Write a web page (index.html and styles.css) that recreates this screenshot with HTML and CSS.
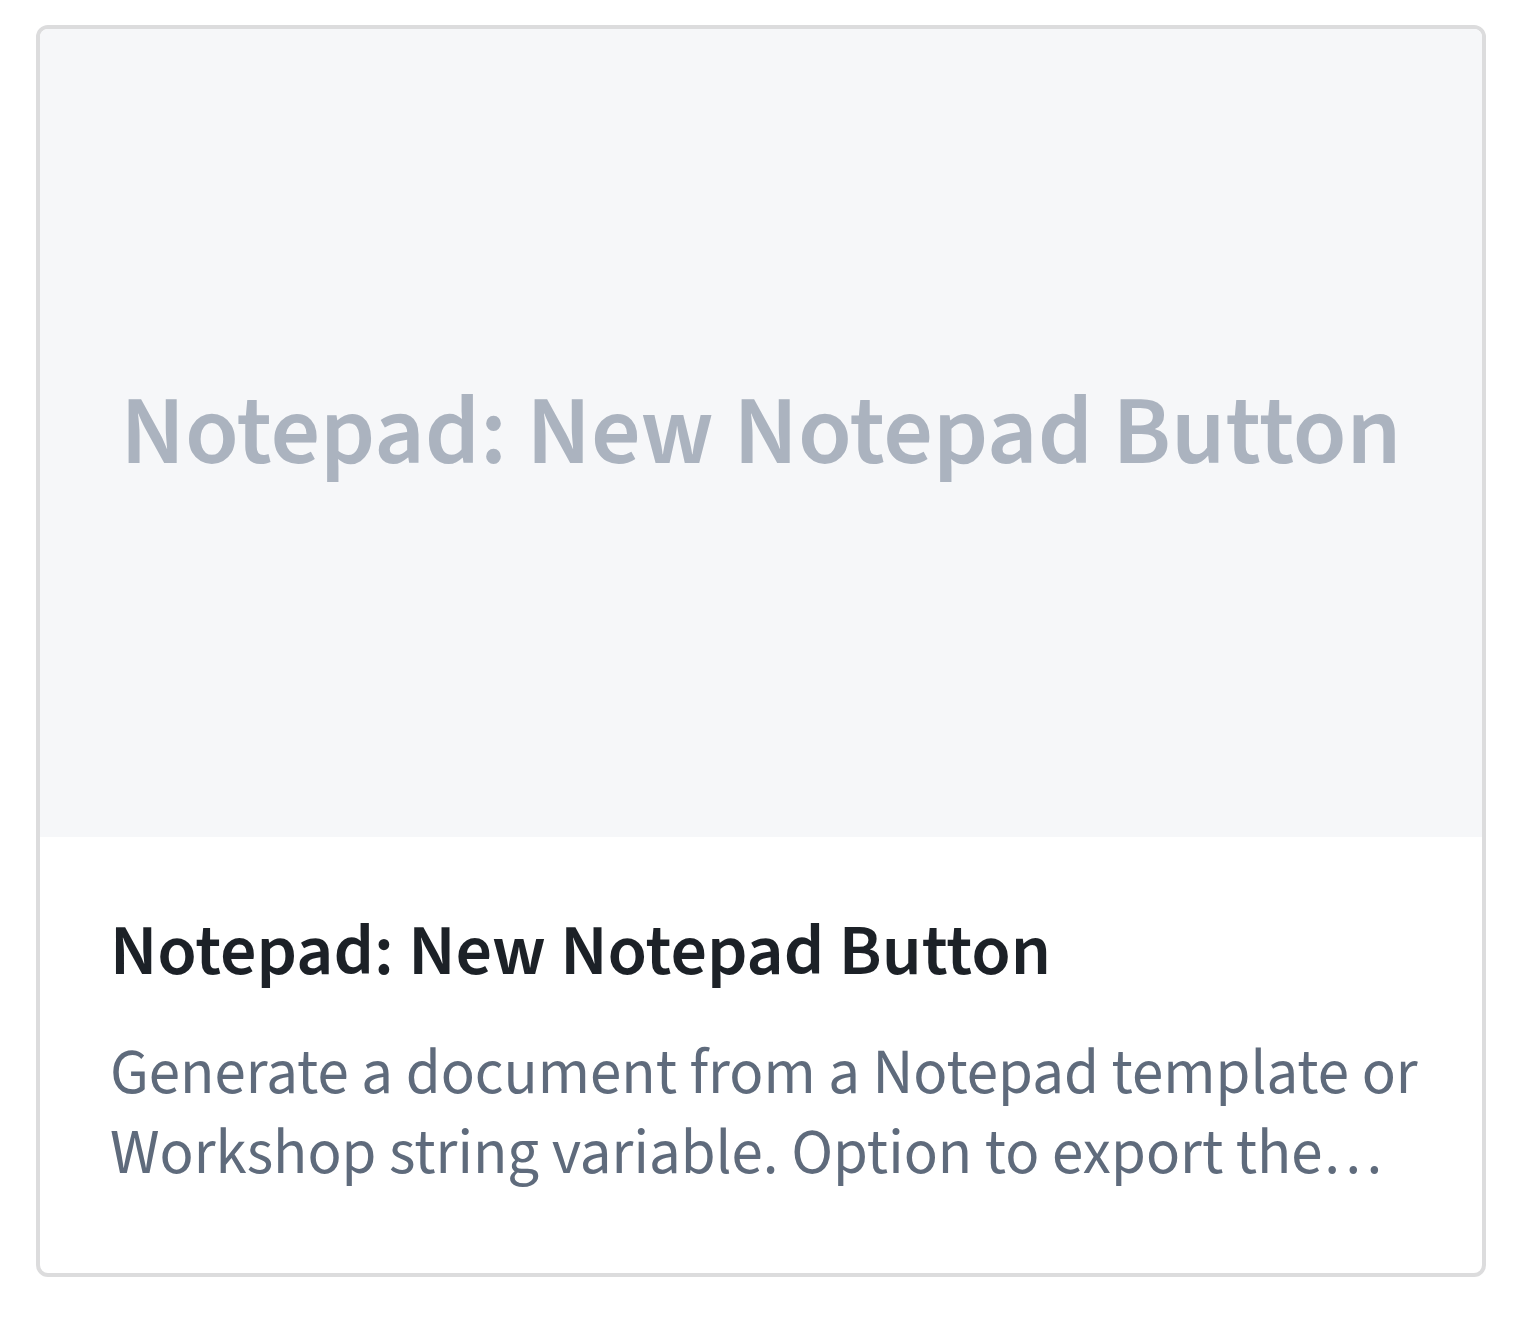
FILE: index.html
```html
<!DOCTYPE html>
<html>
<head>
<meta charset="utf-8">
<link rel="stylesheet" href="styles.css">
</head>
<body>
  <div class="card">
    <div class="preview">
      <span class="preview-text">Notepad: New Notepad Button</span>
    </div>
    <div class="body">
      <div class="title">Notepad: New Notepad Button</div>
      <div class="desc">Generate a document from a Notepad template or Workshop string variable. Option to export the generated document as a PDF or save it to a new Notepad document.</div>
    </div>
  </div>
</body>
</html>
```
FILE: styles.css
```css
html, body {
  margin: 0;
  padding: 0;
  background: #ffffff;
}
body {
  font-family: "Source Sans 3", "Noto Sans", sans-serif;
  padding: 25px 0 0 36px;
}
.card {
  box-sizing: border-box;
  width: 1450px;
  height: 1252px;
  border: 4px solid #dcdcdd;
  border-radius: 12px;
  overflow: hidden;
  background: #ffffff;
  display: flex;
  flex-direction: column;
}
.preview {
  height: 808px;
  flex: none;
  background: #f6f7f9;
  display: flex;
  align-items: center;
  justify-content: center;
}
.preview-text {
  font-size: 98px;
  font-weight: 600;
  color: #abb3bf;
  line-height: 1;
}
.body {
  padding: 70px 50px 0 70px;
}
.title {
  font-size: 72px;
  font-weight: 600;
  line-height: 90px;
  color: #1c2127;
}
.desc {
  margin-top: 36px;
  font-size: 63px;
  line-height: 80px;
  color: #5f6b7c;
  display: -webkit-box;
  -webkit-line-clamp: 2;
  -webkit-box-orient: vertical;
  overflow: hidden;
}
```
